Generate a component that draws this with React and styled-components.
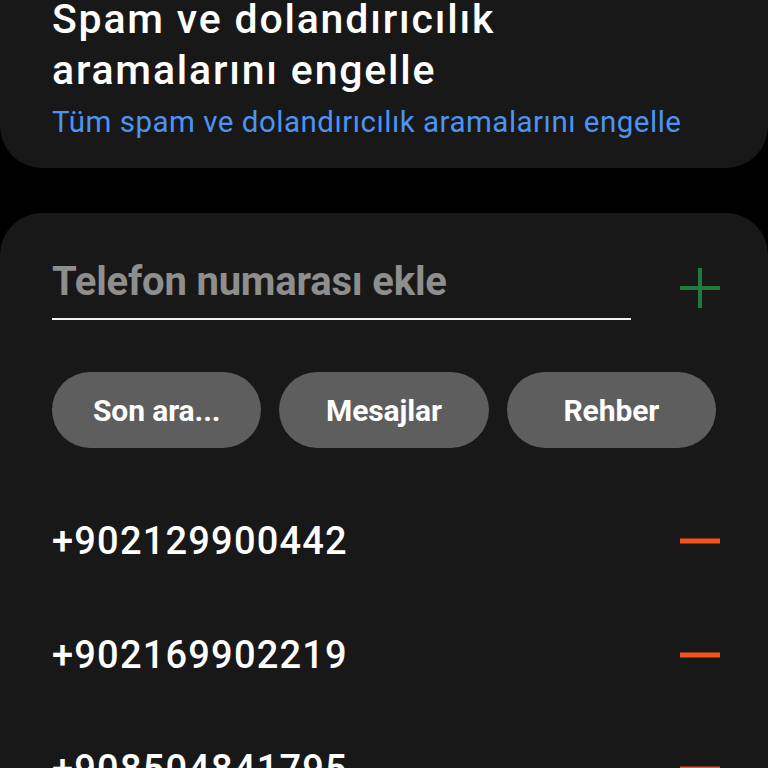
import styled, { createGlobalStyle } from "styled-components";

const GlobalStyle = createGlobalStyle`
  html, body {
    margin: 0;
    padding: 0;
    background: #000;
    overflow: hidden;
  }
  body {
    font-family: Roboto, "Liberation Sans", sans-serif;
    color: #fff;
  }
`;

const numbers = ["+902129900442", "+902169902219", "+908504841795"];
const sources = ["Son ara...", "Mesajlar", "Rehber"];

const App = () => {
  return (
    <>
      <GlobalStyle />
      <Screen>
        <TopCard>
          <Title>Spam ve dolandırıcılık aramalarını engelle</Title>
          <Subtitle>Tüm spam ve dolandırıcılık aramalarını engelle</Subtitle>
        </TopCard>

        <ListCard>
          <InputRow>
            <NumberInput placeholder="Telefon numarası ekle" />
            <IconButton aria-label="Ekle">
              <svg width="40" height="40" viewBox="0 0 40 40">
                <path d="M20 0v40M0 20h40" stroke="#1e7a3d" strokeWidth="4" />
              </svg>
            </IconButton>
          </InputRow>

          <PillRow>
            {sources.map((s) => (
              <Pill key={s}>{s}</Pill>
            ))}
          </PillRow>

          <NumberList>
            {numbers.map((n) => (
              <NumberRow key={n}>
                <NumberText>{n}</NumberText>
                <IconButton aria-label="Kaldır">
                  <svg width="40" height="40" viewBox="0 0 40 40">
                    <path d="M0 20h40" stroke="#f2531a" strokeWidth="5" />
                  </svg>
                </IconButton>
              </NumberRow>
            ))}
          </NumberList>
        </ListCard>
      </Screen>
    </>
  );
};

export default App;

const Screen = styled.div`
  width: 768px;
  height: 768px;
  overflow: hidden;
  display: flex;
  flex-direction: column;
  gap: 45px;
`;

const TopCard = styled.section`
  margin-top: -6px;
  background: #181818;
  border-radius: 0 0 42px 42px;
  padding: 0 52px 28px;
`;

const Title = styled.h1`
  margin: 0;
  width: 500px;
  font-size: 41px;
  font-weight: 500;
  line-height: 51px;
  letter-spacing: 1.8px;
  color: #fff;
`;

const Subtitle = styled.p`
  margin: 8px 0 0;
  font-size: 29.5px;
  line-height: 36px;
  letter-spacing: 0.5px;
  white-space: nowrap;
  color: #4d94f2;
`;

const ListCard = styled.section`
  flex: 1;
  background: #181818;
  border-radius: 42px 42px 0 0;
  padding: 43px 48px 0 52px;
`;

const InputRow = styled.div`
  display: flex;
  align-items: center;
  gap: 49px;
`;

const NumberInput = styled.input`
  flex: 1;
  min-width: 0;
  box-sizing: border-box;
  height: 64px;
  background: transparent;
  border: none;
  border-bottom: 2px solid #f2f2f2;
  padding: 0 0 12px;
  font-family: Roboto, "Liberation Sans", sans-serif;
  font-size: 40px;
  font-weight: 700;
  letter-spacing: -0.2px;
  color: #fff;

  &::placeholder {
    color: #8e8e8e;
  }
  &:focus {
    outline: none;
  }
`;

const IconButton = styled.button`
  width: 40px;
  height: 40px;
  padding: 0;
  border: none;
  background: none;
  display: flex;
  align-items: center;
  justify-content: center;
  flex-shrink: 0;
`;

const PillRow = styled.div`
  margin-top: 52px;
  margin-right: 4px;
  display: grid;
  grid-template-columns: repeat(3, 1fr);
  gap: 18px;
`;

const Pill = styled.button`
  height: 76px;
  border: none;
  border-radius: 38px;
  background: #5e5e5e;
  color: #fff;
  font-family: Roboto, "Liberation Sans", sans-serif;
  font-size: 30px;
  font-weight: 700;
  letter-spacing: -0.1px;
`;

const NumberList = styled.div`
  margin-top: 36px;
  display: flex;
  flex-direction: column;
`;

const NumberRow = styled.div`
  height: 114px;
  display: flex;
  align-items: center;
  justify-content: space-between;
`;

const NumberText = styled.span`
  font-size: 38px;
  font-weight: 500;
  letter-spacing: 1.2px;
  color: #fff;
`;
